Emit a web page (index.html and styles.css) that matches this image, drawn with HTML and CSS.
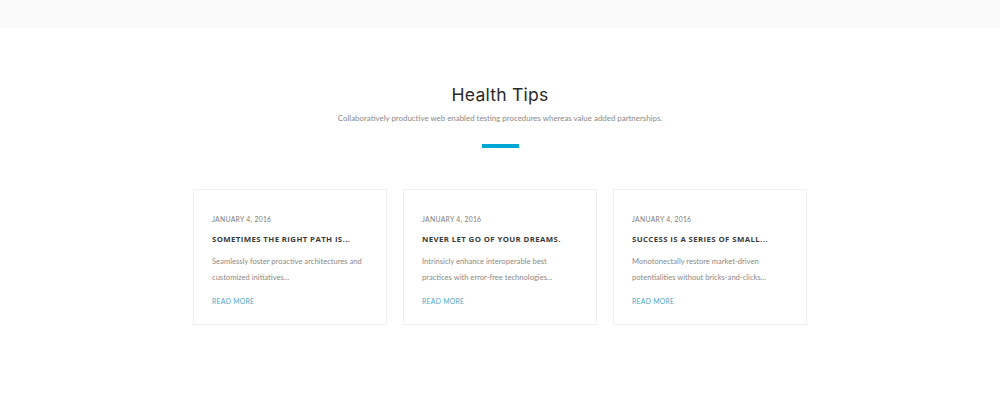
FILE: index.html
```html
<!DOCTYPE html>
<html>
<head>
<meta charset="utf-8">
<link rel="stylesheet" href="styles.css">
</head>
<body>
<div class="topbar"></div>
<section class="tips">
  <h2 class="title">Health Tips</h2>
  <p class="subtitle">Collaboratively productive web enabled testing procedures whereas value added partnerships.</p>
  <div class="divider"></div>
  <div class="cards">
    <article class="card">
      <div class="date">JANUARY 4, 2016</div>
      <h3 class="card-title">SOMETIMES THE RIGHT PATH IS...</h3>
      <p class="card-text">Seamlessly foster proactive architectures and<br>customized initiatives...</p>
      <a class="more">READ MORE</a>
    </article>
    <article class="card">
      <div class="date">JANUARY 4, 2016</div>
      <h3 class="card-title">NEVER LET GO OF YOUR DREAMS.</h3>
      <p class="card-text">Intrinsicly enhance interoperable best<br>practices with error-free technologies...</p>
      <a class="more">READ MORE</a>
    </article>
    <article class="card">
      <div class="date">JANUARY 4, 2016</div>
      <h3 class="card-title">SUCCESS IS A SERIES OF SMALL...</h3>
      <p class="card-text">Monotonectally restore market-driven<br>potentialities without bricks-and-clicks...</p>
      <a class="more">READ MORE</a>
    </article>
  </div>
</section>
</body>
</html>
```
FILE: styles.css
```css
* { box-sizing: border-box; }
html, body { margin: 0; padding: 0; background: #fff; }
body { width: 1000px; height: 410px; overflow: hidden; font-family: Lato, "Liberation Sans", sans-serif; }
.topbar { height: 28px; background: #f9f9f9; }
.tips { display: flex; flex-direction: column; align-items: center; padding-top: 55px; }
.title { margin: 0; font-family: Inter, "Open Sans", sans-serif; font-weight: 400; font-size: 17.6px; line-height: 24px; color: #2a2a2a; letter-spacing: 0.2px; }
.subtitle { margin: 5px 0 0; font-size: 7.9px; line-height: 12px; color: #8a8a8a; }
.divider { width: 37px; height: 4px; background: #00a8d4; margin-top: 20px; }
.cards { display: flex; gap: 16px; margin-top: 41px; }
.card { width: 194px; height: 136px; border: 1px solid #f0f0f0; padding: 24px 0 0 18px; }
.date { font-size: 6.8px; line-height: 10px; letter-spacing: 0.3px; color: #7d7d7d; }
.card-title { margin: 9px 0 0; font-family: "Open Sans", sans-serif; font-weight: 700; font-size: 7.8px; line-height: 12px; letter-spacing: 0.4px; color: #3a3a3a; }
.card-text { margin: 8px 0 0; font-size: 7.6px; line-height: 16px; color: #8a8a8a; white-space: nowrap; }
.more { display: block; margin-top: 11px; font-size: 6.8px; line-height: 10px; letter-spacing: 0.3px; color: #4ba7c9; }
```
